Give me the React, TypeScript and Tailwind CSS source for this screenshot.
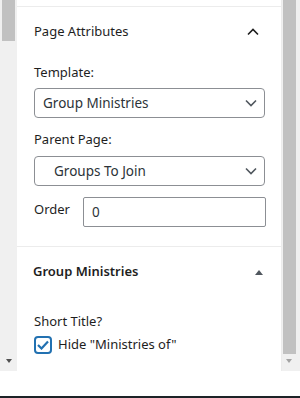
import React from "react";

const font = { fontFamily: '"Noto Sans", "Open Sans", sans-serif' };

const Chevron: React.FC<{ up?: boolean; className?: string }> = ({ up, className }) => (
  <svg width="12" height="8" viewBox="0 0 12 8" className={className} fill="none">
    <path
      d={up ? "M1 6.5 L6 1.5 L11 6.5" : "M1 1.5 L6 6.5 L11 1.5"}
      stroke="currentColor"
      strokeWidth="1.6"
    />
  </svg>
);

const SelectBox: React.FC<{ value: string; indent?: boolean }> = ({ value, indent }) => (
  <div className="flex items-center justify-between h-[30px] w-[231px] border border-[#8c8f94] rounded-[4px] bg-white pr-[7px]">
    <span className={`text-[13.5px] text-[#2c3338] ${indent ? "pl-[19px]" : "pl-[8px]"}`}>{value}</span>
    <Chevron className="text-[#50575e]" />
  </div>
);

export default function App() {
  return (
    <div className="w-[300px] h-[398px] flex flex-col bg-white overflow-hidden" style={font}>
      <div className="flex h-[371px]">
        {/* left scrollbar */}
        <div className="w-[17px] bg-[#f0f0f0] flex flex-col justify-between">
          <div className="ml-[2px] w-[13px] h-[41px] bg-[#c1c1c1]" />
          <div className="flex justify-center mb-[8px]">
            <div className="w-0 h-0 border-l-[3.5px] border-r-[3.5px] border-t-[4px] border-l-transparent border-r-transparent border-t-[#505050]" />
          </div>
        </div>

        {/* panel */}
        <div className="w-[264px] flex flex-col bg-white">
          <div className="h-[6px]" />
          <div className="border-t border-[#ececec] pb-[19px]">
            <div className="flex items-center justify-between h-[50px] pl-[17px] pr-[22px]">
              <span className="text-[13px] font-normal text-[#1e1e1e]">Page Attributes</span>
              <Chevron up className="text-[#1e1e1e]" />
            </div>
            <div className="pl-[17px]">
              <div className="text-[13px] leading-[18px] text-[#1e1e1e] mt-[6px] mb-[7px]">Template:</div>
              <SelectBox value="Group Ministries" />
              <div className="text-[13px] leading-[18px] text-[#1e1e1e] mt-[12px] mb-[8px]">Parent Page:</div>
              <SelectBox value="Groups To Join" indent />
              <div className="flex items-center gap-[13px] mt-[11px]">
                <span className="text-[13px] text-[#1e1e1e] -mt-[4px]">Order</span>
                <div className="h-[30px] w-[183px] border border-[#8c8f94] rounded-[2px] flex items-center pl-[8px]">
                  <span className="text-[13.5px] text-[#2c3338]">0</span>
                </div>
              </div>
            </div>
          </div>
          <div className="border-t border-[#ececec] flex-1">
            <div className="flex items-center justify-between h-[50px] pl-[16px] pr-[18px]">
              <span className="text-[13px] font-semibold text-[#1e1e1e]">Group Ministries</span>
              <div className="w-0 h-0 border-l-[4px] border-r-[4px] border-b-[5px] border-l-transparent border-r-transparent border-b-[#50575e]" />
            </div>
            <div className="pl-[17px]">
              <div className="text-[13px] leading-[18px] text-[#1e1e1e] mt-[15px]">Short Title?</div>
              <div className="flex items-center gap-[6px] mt-[5px]">
                <div className="w-[18px] h-[18px] border-2 border-[#2271b1] rounded-[4px] flex items-center justify-center">
                  <svg width="12" height="10" viewBox="0 0 12 10" fill="none">
                    <path d="M1 5 L4.5 8.5 L11 1.5" stroke="#2271b1" strokeWidth="2.2" />
                  </svg>
                </div>
                <span className="text-[13px] text-[#1e1e1e]">Hide "Ministries of"</span>
              </div>
            </div>
          </div>
        </div>

        {/* right scrollbar */}
        <div className="w-[19px] bg-[#f0f0f0] border-l border-[#ececec] flex flex-col justify-between">
          <div className="ml-[1px] w-[13px] h-[354px] bg-[#c1c1c1]" />
          <div className="flex justify-center pr-[4px] mb-[8px]">
            <div className="w-0 h-0 border-l-[3.5px] border-r-[3.5px] border-t-[4px] border-l-transparent border-r-transparent border-t-[#a3a3a3]" />
          </div>
        </div>
      </div>
      <div className="flex-1 bg-white" />
      <div className="h-[2px] bg-[#1d2327]" />
    </div>
  );
}
